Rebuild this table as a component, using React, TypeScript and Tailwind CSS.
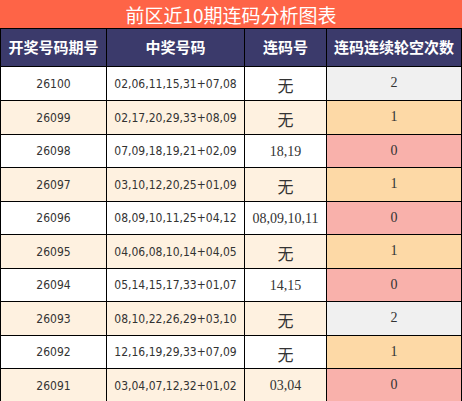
const ROWS = [
  { qi: "26100", nums: "02,06,11,15,31+07,08", lian: "无", miss: 2, h: "h-[33px]" },
  { qi: "26099", nums: "02,17,20,29,33+08,09", lian: "无", miss: 1, h: "h-[33px]" },
  { qi: "26098", nums: "07,09,18,19,21+02,09", lian: "18,19", miss: 0, h: "h-[32px]" },
  { qi: "26097", nums: "03,10,12,20,25+01,09", lian: "无", miss: 1, h: "h-[33px]" },
  { qi: "26096", nums: "08,09,10,11,25+04,12", lian: "08,09,10,11", miss: 0, h: "h-[32px]" },
  { qi: "26095", nums: "04,06,08,10,14+04,05", lian: "无", miss: 1, h: "h-[33px]" },
  { qi: "26094", nums: "05,14,15,17,33+01,07", lian: "14,15", miss: 0, h: "h-[32px]" },
  { qi: "26093", nums: "08,10,22,26,29+03,10", lian: "无", miss: 2, h: "h-[33px]" },
  { qi: "26092", nums: "12,16,19,29,33+07,09", lian: "无", miss: 1, h: "h-[32px]" },
  { qi: "26091", nums: "03,04,07,12,32+01,02", lian: "03,04", miss: 0, h: "h-[33px]" },
];

// colour of the "miss count" cell
const MISS_BG: Record<number, string> = {
  0: "bg-[#f9b1ab]",
  1: "bg-[#fdd9a6]",
  2: "bg-[#f0f0f0]",
};

const sans = "font-['DejaVu_Sans_Condensed','DejaVu_Sans','Noto_Sans_CJK_SC',sans-serif]";
const serif = "font-['Liberation_Serif','Noto_Sans_CJK_SC',serif]";
const cjk = "font-['Noto_Sans_CJK_SC',sans-serif]";

export default function App() {
  return (
    <div className="w-[462px] h-[401px] bg-black overflow-hidden">
      <div className={`h-[28px] bg-[#fe6447] flex items-center justify-center text-white text-[19px] leading-none ${cjk}`}>
        前区近10期连码分析图表
      </div>
      <div className="grid grid-cols-[105px_137px_81px_134px] gap-px px-px pt-px pb-px">
        {["开奖号码期号", "中奖号码", "连码号", "连码连续轮空次数"].map((t) => (
          <div
            key={t}
            className={`h-[37px] bg-[#3b3a6b] text-white text-[15px] font-bold flex items-center justify-center ${cjk}`}
          >
            {t}
          </div>
        ))}
        {ROWS.map((r, i) => {
          const rowBg = i % 2 === 0 ? "bg-white" : "bg-[#fef1e0]";
          return [
            <div key={r.qi + "a"} className={`${r.h} ${rowBg} flex items-center justify-center text-[12px] text-[#333] ${sans}`}>
              {r.qi}
            </div>,
            <div key={r.qi + "b"} className={`${r.h} ${rowBg} flex items-center justify-center text-[12px] text-[#333] ${sans}`}>
              {r.nums}
            </div>,
            <div key={r.qi + "c"} className={`${r.h} ${rowBg} flex items-center justify-center text-[#333] ${r.lian === "无" ? "text-[16px] pt-[3px] " + cjk : "text-[14px] " + serif}`}>
              {r.lian}
            </div>,
            <div key={r.qi + "d"} className={`${r.h} ${MISS_BG[r.miss]} flex items-center justify-center pb-[2px] text-[14px] text-[#333] ${serif}`}>
              {r.miss}
            </div>,
          ];
        })}
      </div>
    </div>
  );
}
